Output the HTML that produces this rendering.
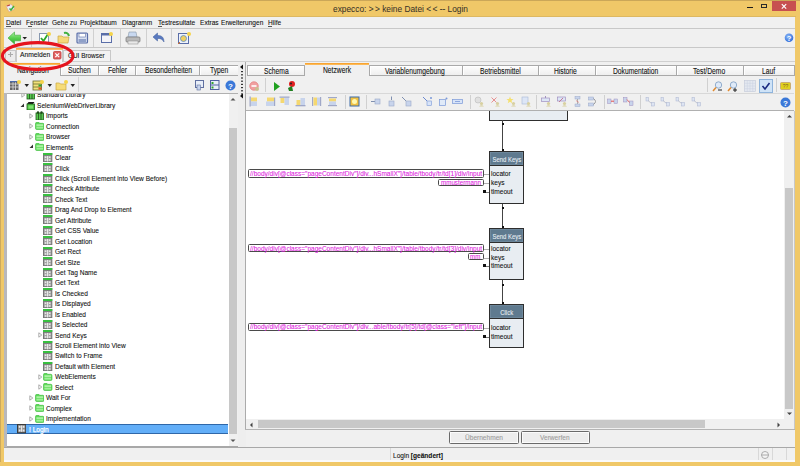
<!DOCTYPE html>
<html><head><meta charset="utf-8"><style>
html,body{margin:0;padding:0;}
body{width:800px;height:466px;overflow:hidden;position:relative;background:#F0C868;font-family:"Liberation Sans", sans-serif;}
div{position:absolute;box-sizing:border-box;}
.t{white-space:nowrap;-webkit-text-stroke:0.1px currentColor;}
</style></head><body>

<div style="left:0px;top:0px;width:1px;height:466px;background:#CDA95C"></div>
<div style="left:0px;top:0px;width:800px;height:1px;background:#CBA758"></div>
<div style="left:4px;top:16px;width:792px;height:1px;background:#DDB862"></div>
<svg style="position:absolute;left:5px;top:3px" width="11" height="10" viewBox="0 0 11 10"><path d="M1 3 L6 1 L10 6 L4 9 Z" fill="#e8eef8" stroke="#e0a070" stroke-width="0.6"/><path d="M2 3 L5 2" stroke="#c04040" stroke-width="1.2"/><path d="M4.5 5.5 L6 7 L9 3" stroke="#40b040" stroke-width="1.5" fill="none"/></svg>
<div class="t" style="left:333px;top:2.50px;font-size:8.3px;line-height:12px;color:#3a3428;letter-spacing:0px;transform:scaleX(1.005);transform-origin:0 0;-webkit-text-stroke:0.05px currentColor;">expecco: <span style="letter-spacing:1.4px">&gt;</span>&gt; keine Datei <span style="letter-spacing:1.4px">&lt;</span>&lt; -- Login</div>
<div style="left:747px;top:6.8px;width:5.5px;height:1.5px;background:#1b1b1b"></div>
<div style="left:761px;top:3.9px;width:6.3px;height:4.6px;border:1px solid #2a2a2a;border-top-width:1.6px;background:#F0C868"></div>
<div style="left:771.6px;top:1px;width:24.4px;height:10.4px;background:#C75050"></div>
<svg style="position:absolute;left:779px;top:2px" width="10" height="9" viewBox="0 0 10 9"><path d="M2.8 2.2 L7.2 6.6 M7.2 2.2 L2.8 6.6" stroke="#fff" stroke-width="1.2"/></svg>
<div style="left:4px;top:17px;width:792px;height:444px;background:#F0F0F0"></div>
<div style="left:4px;top:17px;width:792px;height:11px;background:#F0F0F0"></div>
<div style="left:4px;top:27.8px;width:792px;height:1px;background:#C8C8C8"></div>
<div style="left:4px;top:28.8px;width:792px;height:0.8px;background:#FFFFFF"></div>
<div class="t" style="left:6px;top:17.60px;font-size:8px;line-height:10px;color:#111;letter-spacing:0px;transform:scaleX(0.82);transform-origin:0 0;">Datei</div>
<div class="t" style="left:25.9px;top:17.60px;font-size:8px;line-height:10px;color:#111;letter-spacing:0px;transform:scaleX(0.82);transform-origin:0 0;">Fenster</div>
<div class="t" style="left:51.6px;top:17.60px;font-size:8px;line-height:10px;color:#111;letter-spacing:0px;transform:scaleX(0.82);transform-origin:0 0;">Gehe zu</div>
<div class="t" style="left:79.7px;top:17.60px;font-size:8px;line-height:10px;color:#111;letter-spacing:0px;transform:scaleX(0.82);transform-origin:0 0;">Projektbaum</div>
<div class="t" style="left:122px;top:17.60px;font-size:8px;line-height:10px;color:#111;letter-spacing:0px;transform:scaleX(0.82);transform-origin:0 0;">Diagramm</div>
<div class="t" style="left:158px;top:17.60px;font-size:8px;line-height:10px;color:#111;letter-spacing:0px;transform:scaleX(0.82);transform-origin:0 0;">Testresultate</div>
<div class="t" style="left:199.8px;top:17.60px;font-size:8px;line-height:10px;color:#111;letter-spacing:0px;transform:scaleX(0.82);transform-origin:0 0;">Extras</div>
<div class="t" style="left:221px;top:17.60px;font-size:8px;line-height:10px;color:#111;letter-spacing:0px;transform:scaleX(0.82);transform-origin:0 0;">Erweiterungen</div>
<div class="t" style="left:267.5px;top:17.60px;font-size:8px;line-height:10px;color:#111;letter-spacing:0px;transform:scaleX(0.82);transform-origin:0 0;">Hilfe</div>
<div style="left:6.2px;top:25.6px;width:4.5px;height:0.9px;background:#555"></div>
<div style="left:28.3px;top:25.6px;width:3.6px;height:0.9px;background:#555"></div>
<div style="left:158px;top:25.6px;width:4.2px;height:0.9px;background:#555"></div>
<div style="left:268px;top:25.6px;width:4.4px;height:0.9px;background:#555"></div>
<div style="left:4px;top:29px;width:792px;height:17px;background:#F0F0F0"></div>
<div style="left:4px;top:46.6px;width:792px;height:1px;background:#C8C8C8"></div>
<div style="left:4px;top:47.6px;width:792px;height:0.8px;background:#FAFAFA"></div>
<svg style="position:absolute;left:783.5px;top:33px" width="10" height="10" viewBox="0 0 10 10"><defs><radialGradient id="hq" cx="0.4" cy="0.35" r="0.7"><stop offset="0" stop-color="#8ab8f8"/><stop offset="1" stop-color="#2e6ad8"/></radialGradient></defs><circle cx="5" cy="4.8" r="4.3" fill="url(#hq)"/><text x="5" y="7.8" font-size="7.5" font-weight="bold" text-anchor="middle" fill="#fff" font-family="Liberation Sans">?</text></svg>
<div style="left:31px;top:29.2px;width:1px;height:17.4px;background:#D0D0D0"></div>
<div style="left:93.2px;top:29.2px;width:1px;height:17.4px;background:#D0D0D0"></div>
<div style="left:120.4px;top:29.2px;width:1px;height:17.4px;background:#D0D0D0"></div>
<div style="left:146.3px;top:29.2px;width:1px;height:17.4px;background:#D0D0D0"></div>
<div style="left:171.2px;top:29.2px;width:1px;height:17.4px;background:#D0D0D0"></div>
<svg style="position:absolute;left:7px;top:31px" width="16" height="14" viewBox="0 0 16 14"><defs><linearGradient id="ga" x1="0" y1="0" x2="0" y2="1"><stop offset="0" stop-color="#a8f0a0"/><stop offset="0.5" stop-color="#58d050"/><stop offset="1" stop-color="#30a830"/></linearGradient></defs><path d="M1 7 L7.5 1 L7.5 4.2 L13.5 4.2 L13.5 9.8 L7.5 9.8 L7.5 13 Z" fill="url(#ga)" stroke="#3aa835" stroke-width="0.6"/></svg>
<svg style="position:absolute;left:22px;top:35.5px" width="6" height="5" viewBox="0 0 6 5"><path d="M0.5 1 L5 1 L2.75 3.5 Z" fill="#222"/></svg>
<svg style="position:absolute;left:38px;top:31px" width="14" height="14" viewBox="0 0 14 14"><rect x="1.5" y="2.5" width="9" height="9" fill="#fff" stroke="#8898b0"/><path d="M3 7 L5.5 10 L10 3" stroke="#2aa82a" stroke-width="1.8" fill="none"/><circle cx="11" cy="3" r="2" fill="#f5d44a"/></svg>
<svg style="position:absolute;left:57px;top:31px" width="14" height="14" viewBox="0 0 14 14"><path d="M1 5 L5 5 L6 6 L12 6 L11 12 L1 12 Z" fill="#f5d97a" stroke="#c9a640" stroke-width="0.7"/><path d="M7 2 Q11 1 12 5" stroke="#40b040" stroke-width="2" fill="none"/></svg>
<svg style="position:absolute;left:76px;top:32px" width="13" height="12" viewBox="0 0 13 12"><rect x="1" y="1" width="10.5" height="10" rx="1" fill="#d8e0f0" stroke="#5a6ea8" stroke-width="1.2"/><rect x="3" y="1.5" width="6.5" height="3.5" fill="#fff" stroke="#5a6ea8" stroke-width="0.6"/><rect x="2.5" y="7" width="7.5" height="3" fill="#8fa0c8"/></svg>
<svg style="position:absolute;left:100px;top:31px" width="14" height="14" viewBox="0 0 14 14"><rect x="1.5" y="2.5" width="10" height="9" fill="#f4f4f8" stroke="#5a6ea8"/><rect x="1.5" y="2.5" width="10" height="2" fill="#5a6ea8"/><circle cx="11" cy="3" r="2" fill="#f5d44a"/></svg>
<svg style="position:absolute;left:125px;top:31px" width="16" height="14" viewBox="0 0 16 14"><path d="M4 1 L11 1 L12 6 L3 6 Z" fill="#c8d8f0" stroke="#8898a8" stroke-width="0.6"/><rect x="1" y="6" width="14" height="5" rx="1" fill="#b8b8b8" stroke="#777" stroke-width="0.7"/><rect x="3" y="10" width="10" height="3" fill="#e8e8e8" stroke="#888" stroke-width="0.5"/></svg>
<svg style="position:absolute;left:152px;top:32px" width="14" height="12" viewBox="0 0 14 12"><path d="M1 5 L5.5 1 L5.5 3.5 Q12 3 12 10 Q10 6 5.5 6.5 L5.5 9 Z" fill="#5a7ac0" stroke="#3a5a9a" stroke-width="0.5"/></svg>
<svg style="position:absolute;left:177px;top:31px" width="15" height="14" viewBox="0 0 15 14"><rect x="1.5" y="2.5" width="10" height="10" fill="#eef2fa" stroke="#5a6ea8"/><circle cx="6.5" cy="7.5" r="3" fill="#f0d060" stroke="#5a8ac0" stroke-width="0.8"/><circle cx="12" cy="3" r="2" fill="#f5d44a"/><path d="M1 13 L3 11" stroke="#e07020" stroke-width="1"/></svg>
<div style="left:4px;top:48.4px;width:792px;height:13px;background:#F0F0F0"></div>
<div style="left:4px;top:61px;width:792px;height:1px;background:#D0D0D0"></div>
<div style="left:5px;top:49.8px;width:10.5px;height:11.5px;border:1px solid #C8C8C8;border-bottom:none;background:#ECECEC"></div>
<svg style="position:absolute;left:6.5px;top:51px" width="7" height="7" viewBox="0 0 7 7"><path d="M3.5 1 V6 M1 3.5 H6" stroke="#ababab" stroke-width="1.1"/></svg>
<div style="left:15.5px;top:49px;width:47.5px;height:13px;background:#F7F7F7;border-left:1px solid #C8C8C8;border-right:1px solid #C8C8C8"></div>
<div style="left:15.5px;top:48.2px;width:47.5px;height:2px;background:linear-gradient(#F7A436,#FBC47A)"></div>
<div class="t" style="left:19.7px;top:50.00px;font-size:8px;line-height:10px;color:#111;letter-spacing:0px;transform:scaleX(0.84);transform-origin:0 0;">Anmelden</div>
<svg style="position:absolute;left:53px;top:51px" width="8.5" height="8.5" viewBox="0 0 8.5 8.5"><rect x="0.5" y="0.5" width="7.5" height="7.5" rx="1" fill="#e06060" stroke="#c04040" stroke-width="0.8"/><path d="M2.3 2.3 L6.2 6.2 M6.2 2.3 L2.3 6.2" stroke="#fff" stroke-width="1.2"/></svg>
<div style="left:63px;top:49.5px;width:47.5px;height:11.5px;background:#F2F2F2;border:1px solid #C8C8C8;border-bottom:none"></div>
<div class="t" style="left:68px;top:50.80px;font-size:8px;line-height:10px;color:#111;letter-spacing:0px;transform:scaleX(0.8);transform-origin:0 0;">GUI Browser</div>
<div style="left:4px;top:62px;width:234px;height:13px;background:#F0F0F0"></div>
<div style="left:9.6px;top:63px;width:50.4px;height:13px;background:#F0F0F0"></div>
<div style="left:9.6px;top:63px;width:50.4px;height:2px;background:linear-gradient(#F59A20,#FFC46A)"></div>
<div class="t" style="left:17px;top:65.00px;font-size:8.3px;line-height:10px;color:#111;letter-spacing:0px;transform:scaleX(0.81);transform-origin:0 0;">Navigation</div>
<div style="left:60px;top:64.6px;width:39.3px;height:11px;background:linear-gradient(#FDFDFD,#EFEFEF);border:1px solid #A9A9A9;box-shadow:inset 1px 1px 0 #fff"></div>
<div class="t" style="left:67.8px;top:65.30px;font-size:8.3px;line-height:10px;color:#111;letter-spacing:0px;transform:scaleX(0.81);transform-origin:0 0;">Suchen</div>
<div style="left:98.3px;top:64.6px;width:38.000000000000014px;height:11px;background:linear-gradient(#FDFDFD,#EFEFEF);border:1px solid #A9A9A9;box-shadow:inset 1px 1px 0 #fff"></div>
<div class="t" style="left:108px;top:65.30px;font-size:8.3px;line-height:10px;color:#111;letter-spacing:0px;transform:scaleX(0.81);transform-origin:0 0;">Fehler</div>
<div style="left:135.3px;top:64.6px;width:65.1px;height:11px;background:linear-gradient(#FDFDFD,#EFEFEF);border:1px solid #A9A9A9;box-shadow:inset 1px 1px 0 #fff"></div>
<div class="t" style="left:145px;top:65.30px;font-size:8.3px;line-height:10px;color:#111;letter-spacing:0px;transform:scaleX(0.81);transform-origin:0 0;">Besonderheiten</div>
<div style="left:199.4px;top:64.6px;width:39.5px;height:11px;background:linear-gradient(#FDFDFD,#EFEFEF);border:1px solid #A9A9A9;box-shadow:inset 1px 1px 0 #fff"></div>
<div class="t" style="left:210px;top:65.30px;font-size:8.3px;line-height:10px;color:#111;letter-spacing:0px;transform:scaleX(0.81);transform-origin:0 0;">Typen</div>
<div style="left:7px;top:75.5px;width:231px;height:17.5px;background:#F0F0F0"></div>
<div style="left:7px;top:92.6px;width:231px;height:1px;background:#B0B0B0"></div>
<div style="left:78.4px;top:77px;width:1px;height:15px;background:#D5D5D5"></div>
<svg style="position:absolute;left:9px;top:79px" width="12" height="12" viewBox="0 0 12 12"><rect x="1" y="2" width="8.5" height="9" fill="#666"/><path d="M1 5 H9.5 M1 8 H9.5 M4 2 V11 M6.5 2 V11" stroke="#ddd" stroke-width="0.8"/><rect x="1" y="2" width="8.5" height="1.2" fill="#4a6aa8"/><circle cx="10" cy="3" r="2" fill="#f5d44a"/></svg>
<svg style="position:absolute;left:24px;top:83px" width="6" height="5" viewBox="0 0 6 5"><path d="M0.5 1 L5 1 L2.75 4 Z" fill="#222"/></svg>
<svg style="position:absolute;left:32px;top:79px" width="12" height="12" viewBox="0 0 12 12"><rect x="1" y="2" width="8.5" height="9" fill="#f2e27a" stroke="#6a6a30" stroke-width="0.8"/><path d="M1 5 H9.5 M1 8 H9.5" stroke="#6a6a30" stroke-width="0.8"/><rect x="6.5" y="5.5" width="3" height="2" fill="#30a030"/><rect x="6.5" y="8.5" width="3" height="2" fill="#e05020"/><circle cx="10" cy="3" r="2" fill="#f5d44a"/></svg>
<svg style="position:absolute;left:47px;top:83px" width="6" height="5" viewBox="0 0 6 5"><path d="M0.5 1 L5 1 L2.75 4 Z" fill="#222"/></svg>
<svg style="position:absolute;left:55px;top:79px" width="14" height="12" viewBox="0 0 14 12"><path d="M1 4 L4.5 4 L5.5 5 L11 5 L11 11 L1 11 Z" fill="#f6dc78" stroke="#caa640" stroke-width="0.7"/><circle cx="11" cy="3" r="2" fill="#f5d44a"/></svg>
<svg style="position:absolute;left:70px;top:83px" width="6" height="5" viewBox="0 0 6 5"><path d="M0.5 1 L5 1 L2.75 4 Z" fill="#222"/></svg>
<svg style="position:absolute;left:194px;top:79px" width="11" height="12" viewBox="0 0 11 12"><rect x="1.5" y="1.5" width="8" height="7" fill="#e8eef8" stroke="#6070a0"/><rect x="3" y="6" width="3.5" height="5" fill="#c8d4ec" stroke="#6070a0" stroke-width="0.6"/></svg>
<svg style="position:absolute;left:209px;top:79px" width="11" height="12" viewBox="0 0 11 12"><rect x="1.5" y="1.5" width="8.5" height="9" fill="#e8eef8" stroke="#5060a0"/><path d="M1.5 6 H10" stroke="#5060a0"/><rect x="2.5" y="3" width="2" height="2" fill="#30a030"/><rect x="2.5" y="7.5" width="2" height="2" fill="#30a030"/></svg>
<svg style="position:absolute;left:225px;top:80px" width="11" height="11" viewBox="0 0 11 11"><circle cx="5.5" cy="5.5" r="5" fill="#3a78d8"/><text x="5.5" y="8.6" font-size="8" font-weight="bold" text-anchor="middle" fill="#fff" font-family="Liberation Sans">?</text></svg>
<div style="left:4px;top:93px;width:3px;height:354px;background:#B8B8BC"></div>
<div style="left:7px;top:93.5px;width:221.5px;height:352.5px;background:#FFFFFF"></div>
<div style="left:228.5px;top:93.5px;width:8.5px;height:352.5px;background:#F0F0F0"></div>
<div style="left:229px;top:128px;width:8px;height:306px;background:#C8C8C8"></div>
<svg style="position:absolute;left:229px;top:96px" width="8" height="6" viewBox="0 0 8 6"><path d="M1.5 4.5 L4 2 L6.5 4.5 Z" fill="#555"/></svg>
<svg style="position:absolute;left:229px;top:438px" width="8" height="6" viewBox="0 0 8 6"><path d="M1.5 1.5 L4 4 L6.5 1.5 Z" fill="#555"/></svg>
<div style="left:7px;top:446px;width:231px;height:1px;background:#A8A8A8"></div>
<div style="left:237.5px;top:62px;width:8px;height:385px;background:#EEEEEE"></div>
<svg style="position:absolute;left:239px;top:64px" width="6" height="35" viewBox="0 0 6 35"><path d="M1 3 L4 0.5 L4 5.5 Z" fill="#111"/><rect x="2" y="7.0" width="2" height="1.2" fill="#333"/><rect x="2" y="10.2" width="2" height="1.2" fill="#333"/><rect x="2" y="13.4" width="2" height="1.2" fill="#333"/><rect x="2" y="16.6" width="2" height="1.2" fill="#333"/><rect x="2" y="19.8" width="2" height="1.2" fill="#333"/><rect x="2" y="23.0" width="2" height="1.2" fill="#333"/><rect x="2" y="26.2" width="2" height="1.2" fill="#333"/><rect x="2" y="29.4" width="2" height="1.2" fill="#333"/><path d="M1 32 L4 29.5 L4 34.5 Z" fill="#111"/></svg>
<div style="left:244.9px;top:62px;width:1.6px;height:368px;background:#ABABAB"></div>
<div style="left:7px;top:93.5px;width:221px;height:352px;overflow:hidden">
<svg style="position:absolute;left:13.50px;top:-1.34px" width="5" height="6" viewBox="0 0 5 6"><path d="M0.8 0.8 L3.8 3 L0.8 5.2 Z" fill="none" stroke="#9a9a9a" stroke-width="0.8"/></svg>
<svg style="position:absolute;left:18.50px;top:-3.34px" width="9.5" height="9.5" viewBox="0 0 9.5 9.5"><rect x="1" y="2" width="7.5" height="7" fill="#58c850" stroke="#1e5a1a" stroke-width="0.8"/><path d="M3.5 2 V9 M6 2 V9" stroke="#1e4a1a" stroke-width="0.8"/><circle cx="3" cy="1.5" r="1.2" fill="#1e4a1a"/><circle cx="6.5" cy="1.5" r="1.2" fill="#1e4a1a"/></svg>
<div class="t" style="left:30.00px;top:-3.04px;font-size:8px;line-height:10px;color:#111;transform:scaleX(0.82);transform-origin:0 0;">Standard Library</div>
<svg style="position:absolute;left:13.00px;top:9.10px" width="5" height="5" viewBox="0 0 5 5"><path d="M4 0.5 L4 4 L0.5 4 Z" fill="#333"/></svg>
<svg style="position:absolute;left:18.50px;top:7.00px" width="9.5" height="9.5" viewBox="0 0 9.5 9.5"><path d="M1 3 L7 3 L8.5 1 L2.5 1 Z" fill="#1a1a1a"/><rect x="1" y="3" width="7.5" height="6" fill="#52c84a" stroke="#1e5a1a" stroke-width="0.8"/><rect x="2.5" y="4.5" width="4.5" height="3" fill="#80e070"/></svg>
<div class="t" style="left:30.00px;top:7.40px;font-size:8px;line-height:10px;color:#111;transform:scaleX(0.82);transform-origin:0 0;">SeleniumWebDriverLibrary</div>
<svg style="position:absolute;left:22.00px;top:19.54px" width="5" height="6" viewBox="0 0 5 6"><path d="M0.8 0.8 L3.8 3 L0.8 5.2 Z" fill="none" stroke="#9a9a9a" stroke-width="0.8"/></svg>
<svg style="position:absolute;left:27.50px;top:17.44px" width="9.5" height="9.5" viewBox="0 0 9.5 9.5"><rect x="1" y="2" width="7.5" height="7" fill="#58c850" stroke="#1e5a1a" stroke-width="0.8"/><path d="M3.5 2 V9 M6 2 V9" stroke="#1e4a1a" stroke-width="0.8"/><circle cx="3" cy="1.5" r="1.2" fill="#1e4a1a"/><circle cx="6.5" cy="1.5" r="1.2" fill="#1e4a1a"/></svg>
<div class="t" style="left:39.00px;top:17.84px;font-size:8px;line-height:10px;color:#111;transform:scaleX(0.82);transform-origin:0 0;">Imports</div>
<svg style="position:absolute;left:22.00px;top:29.98px" width="5" height="6" viewBox="0 0 5 6"><path d="M0.8 0.8 L3.8 3 L0.8 5.2 Z" fill="none" stroke="#9a9a9a" stroke-width="0.8"/></svg>
<svg style="position:absolute;left:27.50px;top:28.88px" width="9.5" height="8" viewBox="0 0 9.5 8"><path d="M0.5 1.8 Q0.5 0.3 1.8 0.3 L3.8 0.3 L4.8 1.3 L7.8 1.3 Q9 1.3 9 2.6 L9 6.3 Q9 7.5 7.8 7.5 L1.8 7.5 Q0.5 7.5 0.5 6.3 Z" fill="#5cd858" stroke="#38b836" stroke-width="0.6"/><rect x="1.4" y="2.3" width="6.8" height="1.6" fill="#b4f6ac"/><rect x="1.4" y="4.6" width="6.8" height="2" fill="#a0f098"/></svg>
<div class="t" style="left:39.00px;top:28.28px;font-size:8px;line-height:10px;color:#111;transform:scaleX(0.82);transform-origin:0 0;">Connection</div>
<svg style="position:absolute;left:22.00px;top:40.42px" width="5" height="6" viewBox="0 0 5 6"><path d="M0.8 0.8 L3.8 3 L0.8 5.2 Z" fill="none" stroke="#9a9a9a" stroke-width="0.8"/></svg>
<svg style="position:absolute;left:27.50px;top:39.32px" width="9.5" height="8" viewBox="0 0 9.5 8"><path d="M0.5 1.8 Q0.5 0.3 1.8 0.3 L3.8 0.3 L4.8 1.3 L7.8 1.3 Q9 1.3 9 2.6 L9 6.3 Q9 7.5 7.8 7.5 L1.8 7.5 Q0.5 7.5 0.5 6.3 Z" fill="#5cd858" stroke="#38b836" stroke-width="0.6"/><rect x="1.4" y="2.3" width="6.8" height="1.6" fill="#b4f6ac"/><rect x="1.4" y="4.6" width="6.8" height="2" fill="#a0f098"/></svg>
<div class="t" style="left:39.00px;top:38.72px;font-size:8px;line-height:10px;color:#111;transform:scaleX(0.82);transform-origin:0 0;">Browser</div>
<svg style="position:absolute;left:22.00px;top:50.86px" width="5" height="5" viewBox="0 0 5 5"><path d="M4 0.5 L4 4 L0.5 4 Z" fill="#333"/></svg>
<svg style="position:absolute;left:27.50px;top:49.76px" width="9.5" height="8" viewBox="0 0 9.5 8"><path d="M0.5 1.8 Q0.5 0.3 1.8 0.3 L3.8 0.3 L4.8 1.3 L7.8 1.3 Q9 1.3 9 2.6 L9 6.3 Q9 7.5 7.8 7.5 L1.8 7.5 Q0.5 7.5 0.5 6.3 Z" fill="#5cd858" stroke="#38b836" stroke-width="0.6"/><rect x="1.4" y="2.3" width="6.8" height="1.6" fill="#b4f6ac"/><rect x="1.4" y="4.6" width="6.8" height="2" fill="#a0f098"/></svg>
<div class="t" style="left:39.00px;top:49.16px;font-size:8px;line-height:10px;color:#111;transform:scaleX(0.82);transform-origin:0 0;">Elements</div>
<svg style="position:absolute;left:36.20px;top:59.20px" width="9.5" height="9.5" viewBox="0 0 9.5 9.5"><rect x="0" y="0" width="9.3" height="9" fill="#767676"/><rect x="0" y="0" width="9.3" height="2" fill="#38c040"/><rect x="1" y="2.8" width="7.3" height="5.4" fill="#a4a4a4"/><rect x="1.8" y="3.4" width="1.6" height="1.6" fill="#e8e8e8"/><rect x="5.9" y="3.4" width="1.6" height="1.6" fill="#e8e8e8"/><rect x="1.8" y="6.2" width="1.6" height="1.6" fill="#e8e8e8"/><rect x="5.9" y="6.2" width="1.6" height="1.6" fill="#e8e8e8"/><rect x="4.1" y="3" width="1.1" height="5.4" fill="#f0f0f0"/></svg>
<div class="t" style="left:48.00px;top:59.60px;font-size:8px;line-height:10px;color:#111;transform:scaleX(0.82);transform-origin:0 0;">Clear</div>
<svg style="position:absolute;left:36.20px;top:69.64px" width="9.5" height="9.5" viewBox="0 0 9.5 9.5"><rect x="0" y="0" width="9.3" height="9" fill="#767676"/><rect x="0" y="0" width="9.3" height="2" fill="#38c040"/><rect x="1" y="2.8" width="7.3" height="5.4" fill="#a4a4a4"/><rect x="1.8" y="3.4" width="1.6" height="1.6" fill="#e8e8e8"/><rect x="5.9" y="3.4" width="1.6" height="1.6" fill="#e8e8e8"/><rect x="1.8" y="6.2" width="1.6" height="1.6" fill="#e8e8e8"/><rect x="5.9" y="6.2" width="1.6" height="1.6" fill="#e8e8e8"/><rect x="4.1" y="3" width="1.1" height="5.4" fill="#f0f0f0"/></svg>
<div class="t" style="left:48.00px;top:70.04px;font-size:8px;line-height:10px;color:#111;transform:scaleX(0.82);transform-origin:0 0;">Click</div>
<svg style="position:absolute;left:36.20px;top:80.08px" width="9.5" height="9.5" viewBox="0 0 9.5 9.5"><rect x="0" y="0" width="9.3" height="9" fill="#767676"/><rect x="0" y="0" width="9.3" height="2" fill="#38c040"/><rect x="1" y="2.8" width="7.3" height="5.4" fill="#a4a4a4"/><rect x="1.8" y="3.4" width="1.6" height="1.6" fill="#e8e8e8"/><rect x="5.9" y="3.4" width="1.6" height="1.6" fill="#e8e8e8"/><rect x="1.8" y="6.2" width="1.6" height="1.6" fill="#e8e8e8"/><rect x="5.9" y="6.2" width="1.6" height="1.6" fill="#e8e8e8"/><rect x="4.1" y="3" width="1.1" height="5.4" fill="#f0f0f0"/></svg>
<div class="t" style="left:48.00px;top:80.48px;font-size:8px;line-height:10px;color:#111;transform:scaleX(0.82);transform-origin:0 0;">Click (Scroll Element into View Before)</div>
<svg style="position:absolute;left:36.20px;top:90.52px" width="9.5" height="9.5" viewBox="0 0 9.5 9.5"><rect x="0" y="0" width="9.3" height="9" fill="#767676"/><rect x="0" y="0" width="9.3" height="2" fill="#38c040"/><rect x="1" y="2.8" width="7.3" height="5.4" fill="#a4a4a4"/><rect x="1.8" y="3.4" width="1.6" height="1.6" fill="#e8e8e8"/><rect x="5.9" y="3.4" width="1.6" height="1.6" fill="#e8e8e8"/><rect x="1.8" y="6.2" width="1.6" height="1.6" fill="#e8e8e8"/><rect x="5.9" y="6.2" width="1.6" height="1.6" fill="#e8e8e8"/><rect x="4.1" y="3" width="1.1" height="5.4" fill="#f0f0f0"/></svg>
<div class="t" style="left:48.00px;top:90.92px;font-size:8px;line-height:10px;color:#111;transform:scaleX(0.82);transform-origin:0 0;">Check Attribute</div>
<svg style="position:absolute;left:36.20px;top:100.96px" width="9.5" height="9.5" viewBox="0 0 9.5 9.5"><rect x="0" y="0" width="9.3" height="9" fill="#767676"/><rect x="0" y="0" width="9.3" height="2" fill="#38c040"/><rect x="1" y="2.8" width="7.3" height="5.4" fill="#a4a4a4"/><rect x="1.8" y="3.4" width="1.6" height="1.6" fill="#e8e8e8"/><rect x="5.9" y="3.4" width="1.6" height="1.6" fill="#e8e8e8"/><rect x="1.8" y="6.2" width="1.6" height="1.6" fill="#e8e8e8"/><rect x="5.9" y="6.2" width="1.6" height="1.6" fill="#e8e8e8"/><rect x="4.1" y="3" width="1.1" height="5.4" fill="#f0f0f0"/></svg>
<div class="t" style="left:48.00px;top:101.36px;font-size:8px;line-height:10px;color:#111;transform:scaleX(0.82);transform-origin:0 0;">Check Text</div>
<svg style="position:absolute;left:36.20px;top:111.40px" width="9.5" height="9.5" viewBox="0 0 9.5 9.5"><rect x="0" y="0" width="9.3" height="9" fill="#767676"/><rect x="0" y="0" width="9.3" height="2" fill="#38c040"/><rect x="1" y="2.8" width="7.3" height="5.4" fill="#a4a4a4"/><rect x="1.8" y="3.4" width="1.6" height="1.6" fill="#e8e8e8"/><rect x="5.9" y="3.4" width="1.6" height="1.6" fill="#e8e8e8"/><rect x="1.8" y="6.2" width="1.6" height="1.6" fill="#e8e8e8"/><rect x="5.9" y="6.2" width="1.6" height="1.6" fill="#e8e8e8"/><rect x="4.1" y="3" width="1.1" height="5.4" fill="#f0f0f0"/></svg>
<div class="t" style="left:48.00px;top:111.80px;font-size:8px;line-height:10px;color:#111;transform:scaleX(0.82);transform-origin:0 0;">Drag And Drop to Element</div>
<svg style="position:absolute;left:36.20px;top:121.84px" width="9.5" height="9.5" viewBox="0 0 9.5 9.5"><rect x="0" y="0" width="9.3" height="9" fill="#767676"/><rect x="0" y="0" width="9.3" height="2" fill="#38c040"/><rect x="1" y="2.8" width="7.3" height="5.4" fill="#a4a4a4"/><rect x="1.8" y="3.4" width="1.6" height="1.6" fill="#e8e8e8"/><rect x="5.9" y="3.4" width="1.6" height="1.6" fill="#e8e8e8"/><rect x="1.8" y="6.2" width="1.6" height="1.6" fill="#e8e8e8"/><rect x="5.9" y="6.2" width="1.6" height="1.6" fill="#e8e8e8"/><rect x="4.1" y="3" width="1.1" height="5.4" fill="#f0f0f0"/></svg>
<div class="t" style="left:48.00px;top:122.24px;font-size:8px;line-height:10px;color:#111;transform:scaleX(0.82);transform-origin:0 0;">Get Attribute</div>
<svg style="position:absolute;left:36.20px;top:132.28px" width="9.5" height="9.5" viewBox="0 0 9.5 9.5"><rect x="0" y="0" width="9.3" height="9" fill="#767676"/><rect x="0" y="0" width="9.3" height="2" fill="#38c040"/><rect x="1" y="2.8" width="7.3" height="5.4" fill="#a4a4a4"/><rect x="1.8" y="3.4" width="1.6" height="1.6" fill="#e8e8e8"/><rect x="5.9" y="3.4" width="1.6" height="1.6" fill="#e8e8e8"/><rect x="1.8" y="6.2" width="1.6" height="1.6" fill="#e8e8e8"/><rect x="5.9" y="6.2" width="1.6" height="1.6" fill="#e8e8e8"/><rect x="4.1" y="3" width="1.1" height="5.4" fill="#f0f0f0"/></svg>
<div class="t" style="left:48.00px;top:132.68px;font-size:8px;line-height:10px;color:#111;transform:scaleX(0.82);transform-origin:0 0;">Get CSS Value</div>
<svg style="position:absolute;left:36.20px;top:142.72px" width="9.5" height="9.5" viewBox="0 0 9.5 9.5"><rect x="0" y="0" width="9.3" height="9" fill="#767676"/><rect x="0" y="0" width="9.3" height="2" fill="#38c040"/><rect x="1" y="2.8" width="7.3" height="5.4" fill="#a4a4a4"/><rect x="1.8" y="3.4" width="1.6" height="1.6" fill="#e8e8e8"/><rect x="5.9" y="3.4" width="1.6" height="1.6" fill="#e8e8e8"/><rect x="1.8" y="6.2" width="1.6" height="1.6" fill="#e8e8e8"/><rect x="5.9" y="6.2" width="1.6" height="1.6" fill="#e8e8e8"/><rect x="4.1" y="3" width="1.1" height="5.4" fill="#f0f0f0"/></svg>
<div class="t" style="left:48.00px;top:143.12px;font-size:8px;line-height:10px;color:#111;transform:scaleX(0.82);transform-origin:0 0;">Get Location</div>
<svg style="position:absolute;left:36.20px;top:153.16px" width="9.5" height="9.5" viewBox="0 0 9.5 9.5"><rect x="0" y="0" width="9.3" height="9" fill="#767676"/><rect x="0" y="0" width="9.3" height="2" fill="#38c040"/><rect x="1" y="2.8" width="7.3" height="5.4" fill="#a4a4a4"/><rect x="1.8" y="3.4" width="1.6" height="1.6" fill="#e8e8e8"/><rect x="5.9" y="3.4" width="1.6" height="1.6" fill="#e8e8e8"/><rect x="1.8" y="6.2" width="1.6" height="1.6" fill="#e8e8e8"/><rect x="5.9" y="6.2" width="1.6" height="1.6" fill="#e8e8e8"/><rect x="4.1" y="3" width="1.1" height="5.4" fill="#f0f0f0"/></svg>
<div class="t" style="left:48.00px;top:153.56px;font-size:8px;line-height:10px;color:#111;transform:scaleX(0.82);transform-origin:0 0;">Get Rect</div>
<svg style="position:absolute;left:36.20px;top:163.60px" width="9.5" height="9.5" viewBox="0 0 9.5 9.5"><rect x="0" y="0" width="9.3" height="9" fill="#767676"/><rect x="0" y="0" width="9.3" height="2" fill="#38c040"/><rect x="1" y="2.8" width="7.3" height="5.4" fill="#a4a4a4"/><rect x="1.8" y="3.4" width="1.6" height="1.6" fill="#e8e8e8"/><rect x="5.9" y="3.4" width="1.6" height="1.6" fill="#e8e8e8"/><rect x="1.8" y="6.2" width="1.6" height="1.6" fill="#e8e8e8"/><rect x="5.9" y="6.2" width="1.6" height="1.6" fill="#e8e8e8"/><rect x="4.1" y="3" width="1.1" height="5.4" fill="#f0f0f0"/></svg>
<div class="t" style="left:48.00px;top:164.00px;font-size:8px;line-height:10px;color:#111;transform:scaleX(0.82);transform-origin:0 0;">Get Size</div>
<svg style="position:absolute;left:36.20px;top:174.04px" width="9.5" height="9.5" viewBox="0 0 9.5 9.5"><rect x="0" y="0" width="9.3" height="9" fill="#767676"/><rect x="0" y="0" width="9.3" height="2" fill="#38c040"/><rect x="1" y="2.8" width="7.3" height="5.4" fill="#a4a4a4"/><rect x="1.8" y="3.4" width="1.6" height="1.6" fill="#e8e8e8"/><rect x="5.9" y="3.4" width="1.6" height="1.6" fill="#e8e8e8"/><rect x="1.8" y="6.2" width="1.6" height="1.6" fill="#e8e8e8"/><rect x="5.9" y="6.2" width="1.6" height="1.6" fill="#e8e8e8"/><rect x="4.1" y="3" width="1.1" height="5.4" fill="#f0f0f0"/></svg>
<div class="t" style="left:48.00px;top:174.44px;font-size:8px;line-height:10px;color:#111;transform:scaleX(0.82);transform-origin:0 0;">Get Tag Name</div>
<svg style="position:absolute;left:36.20px;top:184.48px" width="9.5" height="9.5" viewBox="0 0 9.5 9.5"><rect x="0" y="0" width="9.3" height="9" fill="#767676"/><rect x="0" y="0" width="9.3" height="2" fill="#38c040"/><rect x="1" y="2.8" width="7.3" height="5.4" fill="#a4a4a4"/><rect x="1.8" y="3.4" width="1.6" height="1.6" fill="#e8e8e8"/><rect x="5.9" y="3.4" width="1.6" height="1.6" fill="#e8e8e8"/><rect x="1.8" y="6.2" width="1.6" height="1.6" fill="#e8e8e8"/><rect x="5.9" y="6.2" width="1.6" height="1.6" fill="#e8e8e8"/><rect x="4.1" y="3" width="1.1" height="5.4" fill="#f0f0f0"/></svg>
<div class="t" style="left:48.00px;top:184.88px;font-size:8px;line-height:10px;color:#111;transform:scaleX(0.82);transform-origin:0 0;">Get Text</div>
<svg style="position:absolute;left:36.20px;top:194.92px" width="9.5" height="9.5" viewBox="0 0 9.5 9.5"><rect x="0" y="0" width="9.3" height="9" fill="#767676"/><rect x="0" y="0" width="9.3" height="2" fill="#38c040"/><rect x="1" y="2.8" width="7.3" height="5.4" fill="#a4a4a4"/><rect x="1.8" y="3.4" width="1.6" height="1.6" fill="#e8e8e8"/><rect x="5.9" y="3.4" width="1.6" height="1.6" fill="#e8e8e8"/><rect x="1.8" y="6.2" width="1.6" height="1.6" fill="#e8e8e8"/><rect x="5.9" y="6.2" width="1.6" height="1.6" fill="#e8e8e8"/><rect x="4.1" y="3" width="1.1" height="5.4" fill="#f0f0f0"/></svg>
<div class="t" style="left:48.00px;top:195.32px;font-size:8px;line-height:10px;color:#111;transform:scaleX(0.82);transform-origin:0 0;">Is Checked</div>
<svg style="position:absolute;left:36.20px;top:205.36px" width="9.5" height="9.5" viewBox="0 0 9.5 9.5"><rect x="0" y="0" width="9.3" height="9" fill="#767676"/><rect x="0" y="0" width="9.3" height="2" fill="#38c040"/><rect x="1" y="2.8" width="7.3" height="5.4" fill="#a4a4a4"/><rect x="1.8" y="3.4" width="1.6" height="1.6" fill="#e8e8e8"/><rect x="5.9" y="3.4" width="1.6" height="1.6" fill="#e8e8e8"/><rect x="1.8" y="6.2" width="1.6" height="1.6" fill="#e8e8e8"/><rect x="5.9" y="6.2" width="1.6" height="1.6" fill="#e8e8e8"/><rect x="4.1" y="3" width="1.1" height="5.4" fill="#f0f0f0"/></svg>
<div class="t" style="left:48.00px;top:205.76px;font-size:8px;line-height:10px;color:#111;transform:scaleX(0.82);transform-origin:0 0;">Is Displayed</div>
<svg style="position:absolute;left:36.20px;top:215.80px" width="9.5" height="9.5" viewBox="0 0 9.5 9.5"><rect x="0" y="0" width="9.3" height="9" fill="#767676"/><rect x="0" y="0" width="9.3" height="2" fill="#38c040"/><rect x="1" y="2.8" width="7.3" height="5.4" fill="#a4a4a4"/><rect x="1.8" y="3.4" width="1.6" height="1.6" fill="#e8e8e8"/><rect x="5.9" y="3.4" width="1.6" height="1.6" fill="#e8e8e8"/><rect x="1.8" y="6.2" width="1.6" height="1.6" fill="#e8e8e8"/><rect x="5.9" y="6.2" width="1.6" height="1.6" fill="#e8e8e8"/><rect x="4.1" y="3" width="1.1" height="5.4" fill="#f0f0f0"/></svg>
<div class="t" style="left:48.00px;top:216.20px;font-size:8px;line-height:10px;color:#111;transform:scaleX(0.82);transform-origin:0 0;">Is Enabled</div>
<svg style="position:absolute;left:36.20px;top:226.24px" width="9.5" height="9.5" viewBox="0 0 9.5 9.5"><rect x="0" y="0" width="9.3" height="9" fill="#767676"/><rect x="0" y="0" width="9.3" height="2" fill="#38c040"/><rect x="1" y="2.8" width="7.3" height="5.4" fill="#a4a4a4"/><rect x="1.8" y="3.4" width="1.6" height="1.6" fill="#e8e8e8"/><rect x="5.9" y="3.4" width="1.6" height="1.6" fill="#e8e8e8"/><rect x="1.8" y="6.2" width="1.6" height="1.6" fill="#e8e8e8"/><rect x="5.9" y="6.2" width="1.6" height="1.6" fill="#e8e8e8"/><rect x="4.1" y="3" width="1.1" height="5.4" fill="#f0f0f0"/></svg>
<div class="t" style="left:48.00px;top:226.64px;font-size:8px;line-height:10px;color:#111;transform:scaleX(0.82);transform-origin:0 0;">Is Selected</div>
<svg style="position:absolute;left:31.00px;top:238.78px" width="5" height="6" viewBox="0 0 5 6"><path d="M0.8 0.8 L3.8 3 L0.8 5.2 Z" fill="none" stroke="#9a9a9a" stroke-width="0.8"/></svg>
<svg style="position:absolute;left:36.20px;top:236.68px" width="9.5" height="9.5" viewBox="0 0 9.5 9.5"><rect x="0" y="0" width="9.3" height="9" fill="#767676"/><rect x="0" y="0" width="9.3" height="2" fill="#38c040"/><rect x="1" y="2.8" width="7.3" height="5.4" fill="#a4a4a4"/><rect x="1.8" y="3.4" width="1.6" height="1.6" fill="#e8e8e8"/><rect x="5.9" y="3.4" width="1.6" height="1.6" fill="#e8e8e8"/><rect x="1.8" y="6.2" width="1.6" height="1.6" fill="#e8e8e8"/><rect x="5.9" y="6.2" width="1.6" height="1.6" fill="#e8e8e8"/><rect x="4.1" y="3" width="1.1" height="5.4" fill="#f0f0f0"/></svg>
<div class="t" style="left:48.00px;top:237.08px;font-size:8px;line-height:10px;color:#111;transform:scaleX(0.82);transform-origin:0 0;">Send Keys</div>
<svg style="position:absolute;left:36.20px;top:247.12px" width="9.5" height="9.5" viewBox="0 0 9.5 9.5"><rect x="0" y="0" width="9.3" height="9" fill="#767676"/><rect x="0" y="0" width="9.3" height="2" fill="#38c040"/><rect x="1" y="2.8" width="7.3" height="5.4" fill="#a4a4a4"/><rect x="1.8" y="3.4" width="1.6" height="1.6" fill="#e8e8e8"/><rect x="5.9" y="3.4" width="1.6" height="1.6" fill="#e8e8e8"/><rect x="1.8" y="6.2" width="1.6" height="1.6" fill="#e8e8e8"/><rect x="5.9" y="6.2" width="1.6" height="1.6" fill="#e8e8e8"/><rect x="4.1" y="3" width="1.1" height="5.4" fill="#f0f0f0"/></svg>
<div class="t" style="left:48.00px;top:247.52px;font-size:8px;line-height:10px;color:#111;transform:scaleX(0.82);transform-origin:0 0;">Scroll Element into View</div>
<svg style="position:absolute;left:36.20px;top:257.56px" width="9.5" height="9.5" viewBox="0 0 9.5 9.5"><rect x="0" y="0" width="9.3" height="9" fill="#767676"/><rect x="0" y="0" width="9.3" height="2" fill="#38c040"/><rect x="1" y="2.8" width="7.3" height="5.4" fill="#a4a4a4"/><rect x="1.8" y="3.4" width="1.6" height="1.6" fill="#e8e8e8"/><rect x="5.9" y="3.4" width="1.6" height="1.6" fill="#e8e8e8"/><rect x="1.8" y="6.2" width="1.6" height="1.6" fill="#e8e8e8"/><rect x="5.9" y="6.2" width="1.6" height="1.6" fill="#e8e8e8"/><rect x="4.1" y="3" width="1.1" height="5.4" fill="#f0f0f0"/></svg>
<div class="t" style="left:48.00px;top:257.96px;font-size:8px;line-height:10px;color:#111;transform:scaleX(0.82);transform-origin:0 0;">Switch to Frame</div>
<svg style="position:absolute;left:36.20px;top:268.00px" width="9.5" height="9.5" viewBox="0 0 9.5 9.5"><rect x="0" y="0" width="9.3" height="9" fill="#767676"/><rect x="0" y="0" width="9.3" height="2" fill="#38c040"/><rect x="1" y="2.8" width="7.3" height="5.4" fill="#a4a4a4"/><rect x="1.8" y="3.4" width="1.6" height="1.6" fill="#e8e8e8"/><rect x="5.9" y="3.4" width="1.6" height="1.6" fill="#e8e8e8"/><rect x="1.8" y="6.2" width="1.6" height="1.6" fill="#e8e8e8"/><rect x="5.9" y="6.2" width="1.6" height="1.6" fill="#e8e8e8"/><rect x="4.1" y="3" width="1.1" height="5.4" fill="#f0f0f0"/></svg>
<div class="t" style="left:48.00px;top:268.40px;font-size:8px;line-height:10px;color:#111;transform:scaleX(0.82);transform-origin:0 0;">Default with Element</div>
<svg style="position:absolute;left:31.00px;top:280.54px" width="5" height="6" viewBox="0 0 5 6"><path d="M0.8 0.8 L3.8 3 L0.8 5.2 Z" fill="none" stroke="#9a9a9a" stroke-width="0.8"/></svg>
<svg style="position:absolute;left:36.20px;top:279.44px" width="9.5" height="8" viewBox="0 0 9.5 8"><path d="M0.5 1.8 Q0.5 0.3 1.8 0.3 L3.8 0.3 L4.8 1.3 L7.8 1.3 Q9 1.3 9 2.6 L9 6.3 Q9 7.5 7.8 7.5 L1.8 7.5 Q0.5 7.5 0.5 6.3 Z" fill="#5cd858" stroke="#38b836" stroke-width="0.6"/><rect x="1.4" y="2.3" width="6.8" height="1.6" fill="#b4f6ac"/><rect x="1.4" y="4.6" width="6.8" height="2" fill="#a0f098"/></svg>
<div class="t" style="left:48.00px;top:278.84px;font-size:8px;line-height:10px;color:#111;transform:scaleX(0.82);transform-origin:0 0;">WebElements</div>
<svg style="position:absolute;left:31.00px;top:290.98px" width="5" height="6" viewBox="0 0 5 6"><path d="M0.8 0.8 L3.8 3 L0.8 5.2 Z" fill="none" stroke="#9a9a9a" stroke-width="0.8"/></svg>
<svg style="position:absolute;left:36.20px;top:289.88px" width="9.5" height="8" viewBox="0 0 9.5 8"><path d="M0.5 1.8 Q0.5 0.3 1.8 0.3 L3.8 0.3 L4.8 1.3 L7.8 1.3 Q9 1.3 9 2.6 L9 6.3 Q9 7.5 7.8 7.5 L1.8 7.5 Q0.5 7.5 0.5 6.3 Z" fill="#5cd858" stroke="#38b836" stroke-width="0.6"/><rect x="1.4" y="2.3" width="6.8" height="1.6" fill="#b4f6ac"/><rect x="1.4" y="4.6" width="6.8" height="2" fill="#a0f098"/></svg>
<div class="t" style="left:48.00px;top:289.28px;font-size:8px;line-height:10px;color:#111;transform:scaleX(0.82);transform-origin:0 0;">Select</div>
<svg style="position:absolute;left:22.00px;top:301.42px" width="5" height="6" viewBox="0 0 5 6"><path d="M0.8 0.8 L3.8 3 L0.8 5.2 Z" fill="none" stroke="#9a9a9a" stroke-width="0.8"/></svg>
<svg style="position:absolute;left:27.50px;top:300.32px" width="9.5" height="8" viewBox="0 0 9.5 8"><path d="M0.5 1.8 Q0.5 0.3 1.8 0.3 L3.8 0.3 L4.8 1.3 L7.8 1.3 Q9 1.3 9 2.6 L9 6.3 Q9 7.5 7.8 7.5 L1.8 7.5 Q0.5 7.5 0.5 6.3 Z" fill="#5cd858" stroke="#38b836" stroke-width="0.6"/><rect x="1.4" y="2.3" width="6.8" height="1.6" fill="#b4f6ac"/><rect x="1.4" y="4.6" width="6.8" height="2" fill="#a0f098"/></svg>
<div class="t" style="left:39.00px;top:299.72px;font-size:8px;line-height:10px;color:#111;transform:scaleX(0.82);transform-origin:0 0;">Wait For</div>
<svg style="position:absolute;left:22.00px;top:311.86px" width="5" height="6" viewBox="0 0 5 6"><path d="M0.8 0.8 L3.8 3 L0.8 5.2 Z" fill="none" stroke="#9a9a9a" stroke-width="0.8"/></svg>
<svg style="position:absolute;left:27.50px;top:310.76px" width="9.5" height="8" viewBox="0 0 9.5 8"><path d="M0.5 1.8 Q0.5 0.3 1.8 0.3 L3.8 0.3 L4.8 1.3 L7.8 1.3 Q9 1.3 9 2.6 L9 6.3 Q9 7.5 7.8 7.5 L1.8 7.5 Q0.5 7.5 0.5 6.3 Z" fill="#5cd858" stroke="#38b836" stroke-width="0.6"/><rect x="1.4" y="2.3" width="6.8" height="1.6" fill="#b4f6ac"/><rect x="1.4" y="4.6" width="6.8" height="2" fill="#a0f098"/></svg>
<div class="t" style="left:39.00px;top:310.16px;font-size:8px;line-height:10px;color:#111;transform:scaleX(0.82);transform-origin:0 0;">Complex</div>
<svg style="position:absolute;left:22.00px;top:322.30px" width="5" height="6" viewBox="0 0 5 6"><path d="M0.8 0.8 L3.8 3 L0.8 5.2 Z" fill="none" stroke="#9a9a9a" stroke-width="0.8"/></svg>
<svg style="position:absolute;left:27.50px;top:321.20px" width="9.5" height="8" viewBox="0 0 9.5 8"><path d="M0.5 1.8 Q0.5 0.3 1.8 0.3 L3.8 0.3 L4.8 1.3 L7.8 1.3 Q9 1.3 9 2.6 L9 6.3 Q9 7.5 7.8 7.5 L1.8 7.5 Q0.5 7.5 0.5 6.3 Z" fill="#5cd858" stroke="#38b836" stroke-width="0.6"/><rect x="1.4" y="2.3" width="6.8" height="1.6" fill="#b4f6ac"/><rect x="1.4" y="4.6" width="6.8" height="2" fill="#a0f098"/></svg>
<div class="t" style="left:39.00px;top:320.60px;font-size:8px;line-height:10px;color:#111;transform:scaleX(0.82);transform-origin:0 0;">Implementation</div>
<div style="left:0px;top:330.30px;width:221.5px;height:10px;background:#62AEF8;border-top:1px solid #2F67A8;border-bottom:1px solid #2F67A8"></div>
<svg style="position:absolute;left:9.80px;top:330.64px" width="9.5" height="9.5" viewBox="0 0 9.5 9.5"><rect x="0" y="0" width="9.3" height="9.3" fill="#3a3a3a"/><rect x="1" y="1" width="7.3" height="7.3" fill="#8a8a8a"/><rect x="1.8" y="1.8" width="1.8" height="2" fill="#e8e8e8"/><rect x="5.7" y="1.8" width="1.8" height="2" fill="#e8e8e8"/><rect x="1.8" y="5.5" width="1.8" height="2" fill="#e8e8e8"/><rect x="5.7" y="5.5" width="1.8" height="2" fill="#e8e8e8"/><rect x="4.1" y="1.5" width="1.1" height="6.3" fill="#f0f0f0"/></svg>
<div class="t" style="left:21.80px;top:331.04px;font-size:8px;line-height:10px;color:#ffffff;transform:scaleX(0.82);transform-origin:0 0;-webkit-text-stroke:0.25px #fff;">! Login</div>
</div>
<div style="left:246px;top:62px;width:550px;height:385px;background:#F0F0F0"></div>
<div style="left:246.5px;top:65px;width:58.5px;height:11.3px;background:linear-gradient(#FDFDFD,#EFEFEF);border:1px solid #A9A9A9;box-shadow:inset 1px 1px 0 #fff"></div>
<div class="t" style="left:264.4px;top:66.10px;font-size:8.3px;line-height:10px;color:#111;letter-spacing:0px;transform:scaleX(0.81);transform-origin:0 0;">Schema</div>
<div style="left:304.5px;top:63px;width:64.25px;height:14px;background:#F0F0F0"></div>
<div style="left:304.5px;top:63px;width:64.25px;height:2px;background:linear-gradient(#F59A20,#FFC46A)"></div>
<div class="t" style="left:323px;top:64.90px;font-size:8.3px;line-height:10px;color:#111;letter-spacing:0px;transform:scaleX(0.81);transform-origin:0 0;">Netzwerk</div>
<div style="left:368.75px;top:65px;width:94.0px;height:11.3px;background:linear-gradient(#FDFDFD,#EFEFEF);border:1px solid #A9A9A9;box-shadow:inset 1px 1px 0 #fff"></div>
<div class="t" style="left:385px;top:66.10px;font-size:8.3px;line-height:10px;color:#111;letter-spacing:0px;transform:scaleX(0.81);transform-origin:0 0;">Variablenumgebung</div>
<div style="left:461.75px;top:65px;width:76.75px;height:11.3px;background:linear-gradient(#FDFDFD,#EFEFEF);border:1px solid #A9A9A9;box-shadow:inset 1px 1px 0 #fff"></div>
<div class="t" style="left:479.5px;top:66.10px;font-size:8.3px;line-height:10px;color:#111;letter-spacing:0px;transform:scaleX(0.81);transform-origin:0 0;">Betriebsmittel</div>
<div style="left:537.5px;top:65px;width:58.0px;height:11.3px;background:linear-gradient(#FDFDFD,#EFEFEF);border:1px solid #A9A9A9;box-shadow:inset 1px 1px 0 #fff"></div>
<div class="t" style="left:554.4px;top:66.10px;font-size:8.3px;line-height:10px;color:#111;letter-spacing:0px;transform:scaleX(0.81);transform-origin:0 0;">Historie</div>
<div style="left:594.5px;top:65px;width:82.10000000000002px;height:11.3px;background:linear-gradient(#FDFDFD,#EFEFEF);border:1px solid #A9A9A9;box-shadow:inset 1px 1px 0 #fff"></div>
<div class="t" style="left:612.5px;top:66.10px;font-size:8.3px;line-height:10px;color:#111;letter-spacing:0px;transform:scaleX(0.81);transform-origin:0 0;">Dokumentation</div>
<div style="left:675.6px;top:65px;width:68.39999999999998px;height:11.3px;background:linear-gradient(#FDFDFD,#EFEFEF);border:1px solid #A9A9A9;box-shadow:inset 1px 1px 0 #fff"></div>
<div class="t" style="left:693px;top:66.10px;font-size:8.3px;line-height:10px;color:#111;letter-spacing:0px;transform:scaleX(0.81);transform-origin:0 0;">Test/Demo</div>
<div style="left:743px;top:65px;width:51.60000000000002px;height:11.3px;background:linear-gradient(#FDFDFD,#EFEFEF);border:1px solid #A9A9A9;box-shadow:inset 1px 1px 0 #fff"></div>
<div class="t" style="left:761.8px;top:66.10px;font-size:8.3px;line-height:10px;color:#111;letter-spacing:0px;transform:scaleX(0.81);transform-origin:0 0;">Lauf</div>
<div style="left:246px;top:76.5px;width:548px;height:16.5px;background:#F0F0F0"></div>
<div style="left:246px;top:92.6px;width:548px;height:1px;background:#D8D8D8"></div>
<div style="left:265.4px;top:78px;width:1px;height:14px;background:#D0D0D0"></div>
<svg style="position:absolute;left:249px;top:81px" width="11" height="11" viewBox="0 0 11 11"><circle cx="5" cy="5" r="4.3" fill="#f0a0a0" stroke="#e07070" stroke-width="0.6"/><rect x="2.5" y="4.2" width="5" height="1.6" fill="#fff"/><circle cx="8" cy="8" r="2" fill="#c8c090"/></svg>
<svg style="position:absolute;left:272px;top:81px" width="9" height="11" viewBox="0 0 9 11"><path d="M2 1 L8 5.5 L2 10 Z" fill="#20a020"/></svg>
<svg style="position:absolute;left:286px;top:80px" width="11" height="12" viewBox="0 0 11 12"><circle cx="6" cy="4" r="3" fill="#e02020"/><circle cx="5" cy="3.5" r="1" fill="#222"/><path d="M2 8 L6 6 L7 11 L3 11 Z" fill="#208020"/></svg>
<div style="left:706.5px;top:78px;width:1px;height:14px;background:#D0D0D0"></div>
<div style="left:776px;top:78px;width:1px;height:14px;background:#D0D0D0"></div>
<svg style="position:absolute;left:712px;top:81px" width="11" height="11" viewBox="0 0 11 11"><circle cx="6.5" cy="4" r="3.2" fill="#dfeaf8" stroke="#7a9ac0" stroke-width="0.8"/><path d="M1 10 L4 6.5" stroke="#e08a30" stroke-width="1.5"/><path d="M6 9 H10" stroke="#222" stroke-width="1"/></svg>
<svg style="position:absolute;left:727px;top:81px" width="11" height="11" viewBox="0 0 11 11"><circle cx="6.5" cy="4" r="3.2" fill="#dfeaf8" stroke="#7a9ac0" stroke-width="0.8"/><path d="M1 10 L4 6.5" stroke="#e08a30" stroke-width="1.5"/><path d="M6 9 H10 M8 7 V11" stroke="#222" stroke-width="1"/></svg>
<svg style="position:absolute;left:744px;top:80px" width="12" height="12" viewBox="0 0 12 12"><rect x="0.5" y="0.5" width="11" height="11" fill="#e4e8f0" stroke="#c0c8d8" stroke-width="0.6"/><path d="M3.3 0.5 V11.5 M6 0.5 V11.5 M8.7 0.5 V11.5 M0.5 3.3 H11.5 M0.5 6 H11.5 M0.5 8.7 H11.5" stroke="#c8d0e0" stroke-width="0.5"/></svg>
<div style="left:759px;top:79px;width:13.5px;height:13.5px;background:#CFE3F7;border:1px solid #8FB4DC"></div>
<svg style="position:absolute;left:761px;top:81px" width="10" height="10" viewBox="0 0 10 10"><path d="M1.5 5 L4 8 L8.5 2" stroke="#1a2a80" stroke-width="1.6" fill="none"/></svg>
<svg style="position:absolute;left:780px;top:82px" width="11" height="8" viewBox="0 0 11 8"><rect x="0.5" y="0.5" width="10" height="7" rx="1" fill="#e0d020" stroke="#c0a070" stroke-width="0.8"/><text x="5.5" y="6" font-size="5" text-anchor="middle" fill="#806020" font-family="Liberation Sans">??</text></svg>
<div style="left:246px;top:93.5px;width:548px;height:16.5px;background:#F0F0F0"></div>
<div style="left:246px;top:110px;width:548px;height:1px;background:#B0B0B0"></div>
<div style="left:345px;top:95px;width:1px;height:14px;background:#D0D0D0"></div>
<div style="left:365.6px;top:95px;width:1px;height:14px;background:#D0D0D0"></div>
<div style="left:469.5px;top:95px;width:1px;height:14px;background:#D0D0D0"></div>
<div style="left:535.75px;top:95px;width:1px;height:14px;background:#D0D0D0"></div>
<div style="left:603.75px;top:95px;width:1px;height:14px;background:#D0D0D0"></div>
<div style="left:640.4px;top:95px;width:1px;height:14px;background:#D0D0D0"></div>
<svg style="position:absolute;left:248.1px;top:96px" width="11" height="11" viewBox="0 0 11 11"><rect x="1.5" y="0.5" width="1.3" height="10" fill="#a0a8c8"/><rect x="3" y="1.5" width="6" height="4" fill="#f5d870"/><rect x="3" y="5.5" width="6" height="4.5" fill="#c8d4ec"/></svg>
<svg style="position:absolute;left:265.0px;top:96px" width="11" height="11" viewBox="0 0 11 11"><rect x="2" y="1.5" width="7" height="4" fill="#f5d870"/><rect x="1" y="5.5" width="8" height="4.5" fill="#c8d4ec"/><rect x="9" y="1.5" width="1.2" height="8.5" fill="#a0a8c8"/></svg>
<svg style="position:absolute;left:278.5px;top:96px" width="11" height="11" viewBox="0 0 11 11"><rect x="0.5" y="0.5" width="10" height="1.3" fill="#a0a8c8"/><rect x="1.5" y="2" width="4" height="5" fill="#f5d870"/><rect x="5.5" y="2" width="4.5" height="7" fill="#c8d4ec"/></svg>
<svg style="position:absolute;left:295.0px;top:96px" width="11" height="11" viewBox="0 0 11 11"><rect x="0.5" y="9" width="10" height="1.3" fill="#a0a8c8"/><rect x="1.5" y="4" width="4" height="5" fill="#f5d870"/><rect x="5.5" y="2" width="4.5" height="7" fill="#c8d4ec"/></svg>
<svg style="position:absolute;left:310.5px;top:96px" width="11" height="11" viewBox="0 0 11 11"><rect x="1" y="1" width="1.2" height="9" fill="#a0a8c8"/><rect x="9" y="1" width="1.2" height="9" fill="#a0a8c8"/><rect x="2.5" y="1.5" width="3.5" height="8" fill="#f5d870"/><rect x="6" y="1.5" width="3" height="8" fill="#c8d4ec"/></svg>
<svg style="position:absolute;left:326.5px;top:96px" width="11" height="11" viewBox="0 0 11 11"><rect x="1" y="1" width="9" height="1.2" fill="#a0a8c8"/><rect x="1" y="9" width="9" height="1.2" fill="#a0a8c8"/><rect x="2" y="2.5" width="7" height="3" fill="#f5d870"/><rect x="2" y="5.5" width="7" height="3.5" fill="#c8d4ec"/></svg>
<svg style="position:absolute;left:348.5px;top:96px" width="11" height="11" viewBox="0 0 11 11"><rect x="0.5" y="0.5" width="10" height="10" fill="#3a6aa8"/><rect x="1.5" y="1.5" width="8" height="8" fill="#f0c040"/><circle cx="5.5" cy="5.5" r="2.5" fill="#fff8b0"/></svg>
<svg style="position:absolute;left:369.5px;top:96px" width="11" height="11" viewBox="0 0 11 11"><path d="M1 5.5 H5" stroke="#8090b0" stroke-width="1"/><rect x="5" y="3" width="5" height="5" fill="#c8d4ec" stroke="#9aa8c8" stroke-width="0.6"/></svg>
<svg style="position:absolute;left:385.5px;top:96px" width="11" height="11" viewBox="0 0 11 11"><path d="M5.5 0.5 V4" stroke="#8090b0" stroke-width="1"/><rect x="3" y="5" width="5" height="5" fill="#c8d4ec" stroke="#9aa8c8" stroke-width="0.6"/></svg>
<svg style="position:absolute;left:400.5px;top:96px" width="11" height="11" viewBox="0 0 11 11"><path d="M1 1 L5 5" stroke="#8090b0" stroke-width="1"/><rect x="5" y="5" width="5" height="5" fill="#c8d4ec" stroke="#9aa8c8" stroke-width="0.6"/></svg>
<svg style="position:absolute;left:422.0px;top:96px" width="11" height="11" viewBox="0 0 11 11"><path d="M1 1 L5 5" stroke="#6a88d0" stroke-width="1"/><rect x="5" y="5" width="4.5" height="4.5" fill="#d8e4f8" stroke="#7a98d8" stroke-width="0.6"/><circle cx="9" cy="2" r="1" fill="#7a98d8"/></svg>
<svg style="position:absolute;left:437.5px;top:96px" width="11" height="11" viewBox="0 0 11 11"><rect x="1.5" y="3.5" width="6" height="6" fill="#e0eaf8" stroke="#7a98d8" stroke-width="0.7"/><circle cx="8.5" cy="2.5" r="1" fill="#7a98d8"/></svg>
<svg style="position:absolute;left:452.0px;top:96px" width="11" height="11" viewBox="0 0 11 11"><rect x="0.5" y="3.5" width="10" height="4" fill="#d8e4f8" stroke="#7a98d8" stroke-width="0.7"/><path d="M3 5.5 H8" stroke="#7a98d8" stroke-width="0.8"/></svg>
<svg style="position:absolute;left:473.5px;top:96px" width="11" height="11" viewBox="0 0 11 11"><circle cx="4" cy="4" r="3" fill="#e0e0e0" stroke="#b8b8b8" stroke-width="0.6"/><circle cx="7.5" cy="7.5" r="1.6" fill="#d8d0a0"/><path d="M5 10.5 Q7.5 8 10 10.5" fill="#d8d0a0"/></svg>
<svg style="position:absolute;left:490.0px;top:96px" width="11" height="11" viewBox="0 0 11 11"><path d="M1.5 1.5 L6.5 6.5 M6.5 1.5 L1.5 6.5" stroke="#e89090" stroke-width="1"/><circle cx="7.5" cy="7.5" r="1.6" fill="#d8d0a0"/><path d="M5 10.5 Q7.5 8 10 10.5" fill="#d8d0a0"/></svg>
<svg style="position:absolute;left:506.0px;top:96px" width="11" height="11" viewBox="0 0 11 11"><path d="M4 0.5 L5 3 L7.5 3 L5.5 4.8 L6.3 7.3 L4 5.8 L1.7 7.3 L2.5 4.8 L0.5 3 L3 3 Z" fill="#f4e070"/><circle cx="7.5" cy="7.5" r="1.6" fill="#d8d0a0"/><path d="M5 10.5 Q7.5 8 10 10.5" fill="#d8d0a0"/></svg>
<svg style="position:absolute;left:521.0px;top:96px" width="11" height="11" viewBox="0 0 11 11"><rect x="1" y="1" width="6" height="7" fill="#dde6f6" stroke="#a8b8d8" stroke-width="0.6"/><circle cx="7.5" cy="7.5" r="1.6" fill="#d8d0a0"/><path d="M5 10.5 Q7.5 8 10 10.5" fill="#d8d0a0"/></svg>
<svg style="position:absolute;left:540.5px;top:96px" width="11" height="11" viewBox="0 0 11 11"><rect x="0.5" y="2" width="8" height="3.5" fill="#dde6f6" stroke="#a090c0" stroke-width="0.7"/><path d="M4.5 0 V2" stroke="#a090c0"/><circle cx="7.5" cy="7.5" r="1.6" fill="#d8d0a0"/><path d="M5 10.5 Q7.5 8 10 10.5" fill="#d8d0a0"/></svg>
<svg style="position:absolute;left:556.5px;top:96px" width="11" height="11" viewBox="0 0 11 11"><rect x="0.5" y="1" width="8" height="4" fill="#dde6f6" stroke="#a090c0" stroke-width="0.7"/><path d="M2 6 L6 2" stroke="#c06080" stroke-width="0.8"/><circle cx="7.5" cy="7.5" r="1.6" fill="#d8d0a0"/><path d="M5 10.5 Q7.5 8 10 10.5" fill="#d8d0a0"/></svg>
<svg style="position:absolute;left:571.5px;top:96px" width="11" height="11" viewBox="0 0 11 11"><rect x="3" y="0.5" width="5" height="2.5" fill="#c8d4ec" stroke="#9aa8c8" stroke-width="0.5"/><path d="M5.5 3 V8" stroke="#a0a0a0" stroke-width="0.8"/><rect x="3" y="8" width="5" height="2.5" fill="#c8d4ec" stroke="#9aa8c8" stroke-width="0.5"/><path d="M4 4.5 L7 6.5" stroke="#e07070" stroke-width="0.6"/></svg>
<svg style="position:absolute;left:588.0px;top:96px" width="11" height="11" viewBox="0 0 11 11"><rect x="0.5" y="1" width="5" height="3" fill="#c8d4ec" stroke="#9aa8c8" stroke-width="0.5"/><rect x="0.5" y="7" width="5" height="3" fill="#c8d4ec" stroke="#9aa8c8" stroke-width="0.5"/><path d="M5.5 2.5 Q9.5 5.5 5.5 8.5" fill="none" stroke="#888" stroke-width="0.8"/></svg>
<svg style="position:absolute;left:606.5px;top:96px" width="11" height="11" viewBox="0 0 11 11"><rect x="0.5" y="3" width="3.5" height="4.5" fill="#c8d4ec" stroke="#a090c0" stroke-width="0.5"/><rect x="7" y="3" width="3.5" height="4.5" fill="#c8d4ec" stroke="#a090c0" stroke-width="0.5"/><path d="M4 5.2 H7" stroke="#e05050" stroke-width="1"/></svg>
<svg style="position:absolute;left:623.0px;top:96px" width="11" height="11" viewBox="0 0 11 11"><rect x="0.5" y="1.5" width="3.5" height="4.5" fill="#c8d4ec" stroke="#a090c0" stroke-width="0.5"/><rect x="6.5" y="5" width="3.5" height="4.5" fill="#c8d4ec" stroke="#a090c0" stroke-width="0.5"/><path d="M4 3.5 L6.5 6.5" stroke="#e05050" stroke-width="0.8"/></svg>
<svg style="position:absolute;left:644.5px;top:96px" width="11" height="11" viewBox="0 0 11 11"><rect x="1" y="1.5" width="2.5" height="3.5" fill="#dde4f2" stroke="#aab4d0" stroke-width="0.5"/><path d="M3 4.5 L6.5 7.5" stroke="#aab0c4" stroke-width="0.7"/><rect x="6.5" y="6.5" width="3" height="3.5" fill="#dde4f2" stroke="#aab4d0" stroke-width="0.5"/></svg>
<svg style="position:absolute;left:659.5px;top:96px" width="11" height="11" viewBox="0 0 11 11"><rect x="1" y="1.5" width="2.5" height="3.5" fill="#dde4f2" stroke="#aab4d0" stroke-width="0.5"/><path d="M3 4.5 L6.5 7.5" stroke="#aab0c4" stroke-width="0.7"/><rect x="6.5" y="6.5" width="3" height="3.5" fill="#dde4f2" stroke="#aab4d0" stroke-width="0.5"/></svg>
<svg style="position:absolute;left:674.5px;top:96px" width="11" height="11" viewBox="0 0 11 11"><rect x="1" y="1.5" width="2.5" height="3.5" fill="#dde4f2" stroke="#aab4d0" stroke-width="0.5"/><path d="M3 4.5 L6.5 7.5" stroke="#aab0c4" stroke-width="0.7"/><rect x="6.5" y="6.5" width="3" height="3.5" fill="#dde4f2" stroke="#aab4d0" stroke-width="0.5"/></svg>
<svg style="position:absolute;left:690.5px;top:96px" width="11" height="11" viewBox="0 0 11 11"><rect x="1" y="1.5" width="2.5" height="3.5" fill="#dde4f2" stroke="#aab4d0" stroke-width="0.5"/><path d="M3 4.5 L6.5 7.5" stroke="#aab0c4" stroke-width="0.7"/><rect x="6.5" y="6.5" width="3" height="3.5" fill="#dde4f2" stroke="#aab4d0" stroke-width="0.5"/></svg>
<svg style="position:absolute;left:780px;top:97px" width="11" height="11" viewBox="0 0 11 11"><circle cx="5.5" cy="5.5" r="5" fill="#3a78d8"/><text x="5.5" y="8.6" font-size="8" font-weight="bold" text-anchor="middle" fill="#fff" font-family="Liberation Sans">?</text></svg>
<div style="left:246.3px;top:111px;width:538.2px;height:308.2px;background:#FFFFFF"></div>
<div style="left:784.5px;top:111px;width:9px;height:308.5px;background:#F0F0F0"></div>
<div style="left:785px;top:188px;width:8px;height:220.6px;background:#C8C8C8"></div>
<svg style="position:absolute;left:784.5px;top:113px" width="9" height="6" viewBox="0 0 9 6"><path d="M2 4.5 L4.5 2 L7 4.5 Z" fill="#444"/></svg>
<svg style="position:absolute;left:784.5px;top:411px" width="9" height="6" viewBox="0 0 9 6"><path d="M2 1.5 L4.5 4 L7 1.5 Z" fill="#444"/></svg>
<div style="left:247.5px;top:419.2px;width:546px;height:9.6px;background:#F0F0F0"></div>
<div style="left:258px;top:420.2px;width:447px;height:7.8px;background:#C8C8C8"></div>
<svg style="position:absolute;left:248px;top:420.5px" width="6" height="8" viewBox="0 0 6 8"><path d="M4.5 1.5 L2 4 L4.5 6.5 Z" fill="#444"/></svg>
<svg style="position:absolute;left:776px;top:420.5px" width="6" height="8" viewBox="0 0 6 8"><path d="M1.5 1.5 L4 4 L1.5 6.5 Z" fill="#444"/></svg>
<div style="left:793.5px;top:111px;width:1px;height:318px;background:#C8C8C8"></div>
<div style="left:244.8px;top:428.8px;width:550px;height:1.4px;background:#B4B4B4"></div>
<div style="left:488.7px;top:111px;width:79px;height:9.5px;background:#E8EDF2;border:1px solid #2e2e2e;border-top:none"></div>
<div style="left:246.3px;top:110.3px;width:538px;height:1.2px;background:#B0B0B0"></div>
<div style="left:502px;top:120px;width:1px;height:31px;background:#444"></div>
<div style="left:501.5px;top:123px;width:2.2px;height:2.2px;background:#111"></div>
<div style="left:501.5px;top:149px;width:2.2px;height:2.2px;background:#111"></div>
<div style="left:488.7px;top:151px;width:35.4px;height:52.60px;background:#E8EDF2;border:1px solid #2e2e2e"></div>
<div style="left:488.7px;top:151px;width:35.4px;height:15.2px;background:#5F7A8F;border:1px solid #2e2e2e;box-shadow:inset 0 0 0 0.6px #7a92a6"></div>
<div class="t" style="left:488.7px;width:35.4px;text-align:center;top:155.20px;font-size:7.4px;line-height:10px;color:#E8EEF3;transform:scaleX(0.8);transform-origin:50% 0;-webkit-text-stroke:0.1px currentColor">Send Keys</div>
<div class="t" style="left:490.8px;top:168.70px;font-size:8px;line-height:10px;color:#111;letter-spacing:0px;transform:scaleX(0.82);transform-origin:0 0;">locator</div>
<div class="t" style="left:490.8px;top:177.60px;font-size:8px;line-height:10px;color:#111;letter-spacing:0px;transform:scaleX(0.82);transform-origin:0 0;">keys</div>
<div class="t" style="left:490.8px;top:186.90px;font-size:8px;line-height:10px;color:#111;letter-spacing:0px;transform:scaleX(0.82);transform-origin:0 0;">timeout</div>
<div style="left:502px;top:203.6px;width:1px;height:23.900000000000006px;background:#444"></div>
<div style="left:501.5px;top:206.7px;width:2.2px;height:2.2px;background:#111"></div>
<div style="left:501.5px;top:225.5px;width:2.2px;height:2.2px;background:#111"></div>
<div style="left:488.7px;top:227.5px;width:35.4px;height:52.20px;background:#E8EDF2;border:1px solid #2e2e2e"></div>
<div style="left:488.7px;top:227.5px;width:35.4px;height:15.2px;background:#5F7A8F;border:1px solid #2e2e2e;box-shadow:inset 0 0 0 0.6px #7a92a6"></div>
<div class="t" style="left:488.7px;width:35.4px;text-align:center;top:231.70px;font-size:7.4px;line-height:10px;color:#E8EEF3;transform:scaleX(0.8);transform-origin:50% 0;-webkit-text-stroke:0.1px currentColor">Send Keys</div>
<div class="t" style="left:490.8px;top:244.00px;font-size:8px;line-height:10px;color:#111;letter-spacing:0px;transform:scaleX(0.82);transform-origin:0 0;">locator</div>
<div class="t" style="left:490.8px;top:252.50px;font-size:8px;line-height:10px;color:#111;letter-spacing:0px;transform:scaleX(0.82);transform-origin:0 0;">keys</div>
<div class="t" style="left:490.8px;top:261.00px;font-size:8px;line-height:10px;color:#111;letter-spacing:0px;transform:scaleX(0.82);transform-origin:0 0;">timeout</div>
<div style="left:502px;top:279.7px;width:1px;height:24.30000000000001px;background:#444"></div>
<div style="left:501.5px;top:283.7px;width:2.2px;height:2.2px;background:#111"></div>
<div style="left:501.5px;top:302px;width:2.2px;height:2.2px;background:#111"></div>
<div style="left:488.7px;top:304px;width:35.4px;height:43.60px;background:#E8EDF2;border:1px solid #2e2e2e"></div>
<div style="left:488.7px;top:304px;width:35.4px;height:15.2px;background:#5F7A8F;border:1px solid #2e2e2e;box-shadow:inset 0 0 0 0.6px #7a92a6"></div>
<div class="t" style="left:488.7px;width:35.4px;text-align:center;top:308.20px;font-size:7.4px;line-height:10px;color:#E8EEF3;transform:scaleX(0.8);transform-origin:50% 0;-webkit-text-stroke:0.1px currentColor">Click</div>
<div class="t" style="left:490.8px;top:322.60px;font-size:8px;line-height:10px;color:#111;letter-spacing:0px;transform:scaleX(0.82);transform-origin:0 0;">locator</div>
<div class="t" style="left:490.8px;top:332.10px;font-size:8px;line-height:10px;color:#111;letter-spacing:0px;transform:scaleX(0.82);transform-origin:0 0;">timeout</div>
<div style="left:247.7px;top:169.4px;width:236.10px;height:8.30px;background:#fff;border:1px solid #4a4a4a;border-radius:1.5px"></div>
<div class="t" style="left:250px;top:168.75px;font-size:8px;line-height:10px;color:#E01EE0;letter-spacing:0px;transform:scaleX(0.816);transform-origin:0 0;">//body/div[@class=&quot;pageContentDiv&quot;]/div...hSmallX&quot;]/table/tbody/tr/td[1]/div/input</div>
<div style="left:483.8px;top:173.5px;width:5px;height:1px;background:#b0b0b0"></div>
<div style="left:437.5px;top:178.8px;width:46.30px;height:7.40px;background:#fff;border:1px solid #4a4a4a;border-radius:1.5px"></div>
<div class="t" style="left:440.5px;top:177.70px;font-size:8px;line-height:10px;color:#E01EE0;letter-spacing:0px;transform:scaleX(0.78);transform-origin:0 0;">mmustermann</div>
<div style="left:483.8px;top:182.5px;width:5px;height:1px;background:#b0b0b0"></div>
<div style="left:483.2px;top:190.1px;width:3px;height:3px;background:#111"></div>
<div style="left:485.5px;top:191.6px;width:3px;height:1px;background:#777"></div>
<div style="left:247.7px;top:244.3px;width:236.10px;height:8.10px;background:#fff;border:1px solid #4a4a4a;border-radius:1.5px"></div>
<div class="t" style="left:250px;top:243.55px;font-size:8px;line-height:10px;color:#E01EE0;letter-spacing:0px;transform:scaleX(0.816);transform-origin:0 0;">//body/div[@class=&quot;pageContentDiv&quot;]/div...hSmallX&quot;]/table/tbody/tr/td[3]/div/input</div>
<div style="left:483.8px;top:249px;width:5px;height:1px;background:#b0b0b0"></div>
<div style="left:467.8px;top:253.2px;width:16.00px;height:7.30px;background:#fff;border:1px solid #4a4a4a;border-radius:1.5px"></div>
<div class="t" style="left:470.4px;top:252.05px;font-size:8px;line-height:10px;color:#E01EE0;letter-spacing:0px;transform:scaleX(0.77);transform-origin:0 0;">mm</div>
<div style="left:483.8px;top:257.5px;width:5px;height:1px;background:#b0b0b0"></div>
<div style="left:483.2px;top:264.2px;width:3px;height:3px;background:#111"></div>
<div style="left:485.5px;top:265.7px;width:3px;height:1px;background:#777"></div>
<div style="left:247.7px;top:323.3px;width:236.10px;height:7.70px;background:#fff;border:1px solid #4a4a4a;border-radius:1.5px"></div>
<div class="t" style="left:250px;top:322.35px;font-size:8px;line-height:10px;color:#E01EE0;letter-spacing:0px;transform:scaleX(0.816);transform-origin:0 0;">//body/div[@class=&quot;pageContentDiv&quot;]/div...able/tbody/tr[5]/td[@class=&quot;left&quot;]/input</div>
<div style="left:483.8px;top:327.6px;width:5px;height:1px;background:#b0b0b0"></div>
<div style="left:483.2px;top:335.4px;width:3px;height:3px;background:#111"></div>
<div style="left:485.5px;top:336.9px;width:3px;height:1px;background:#777"></div>
<div style="left:246px;top:430.2px;width:548px;height:16px;background:#F0F0F0"></div>
<div style="left:449px;top:431px;width:69.5px;height:12.6px;border:1px solid #6a6a6a;border-radius:1.5px;background:#EDEDED;box-shadow:inset 0 0 0 0.7px #fff"></div>
<div class="t" style="left:465px;top:433.00px;font-size:8px;line-height:10px;color:#9a9a9a;letter-spacing:0px;transform:scaleX(0.82);transform-origin:0 0;">Übernehmen</div>
<div style="left:520.5px;top:431px;width:69.5px;height:12.6px;border:1px solid #6a6a6a;border-radius:1.5px;background:#EDEDED;box-shadow:inset 0 0 0 0.7px #fff"></div>
<div class="t" style="left:540px;top:433.00px;font-size:8px;line-height:10px;color:#9a9a9a;letter-spacing:0px;transform:scaleX(0.82);transform-origin:0 0;">Verwerfen</div>
<div style="left:4px;top:446.5px;width:792px;height:1px;background:#A8A8A8"></div>
<div style="left:4px;top:447.5px;width:792px;height:13.5px;background:#F0F0F0"></div>
<div style="left:390px;top:448px;width:1px;height:13px;background:#D8D8D8"></div>
<div class="t" style="left:393px;top:450.50px;font-size:8px;line-height:10px;color:#111;letter-spacing:0px;transform:scaleX(0.82);transform-origin:0 0;">Login <b>[geändert]</b></div>
<div style="left:758.4px;top:448px;width:1px;height:13px;background:#D8D8D8"></div>
<div style="left:772px;top:448px;width:1px;height:13px;background:#D8D8D8"></div>
<div style="left:786.4px;top:448px;width:1px;height:13px;background:#D8D8D8"></div>
<svg style="position:absolute;left:760px;top:450px" width="10" height="10" viewBox="0 0 10 10"><circle cx="5" cy="5" r="3.5" fill="#f4f4f4" stroke="#9a9a9a" stroke-width="0.8"/><path d="M1.5 5 H8.5" stroke="#9a9a9a" stroke-width="0.8"/></svg>
<div style="left:4px;top:460px;width:792px;height:1.6px;background:#FAFAFA"></div>
<div style="left:0px;top:461.6px;width:800px;height:4.4px;background:#F0C868"></div>
<div style="left:795.2px;top:17px;width:4.8px;height:449px;background:#F0C868"></div>
<svg style="position:absolute;left:0;top:0" width="800" height="466"><ellipse cx="37.7" cy="56" rx="35.3" ry="13.4" fill="none" stroke="#E5141E" stroke-width="3.1"/></svg>
</body></html>
